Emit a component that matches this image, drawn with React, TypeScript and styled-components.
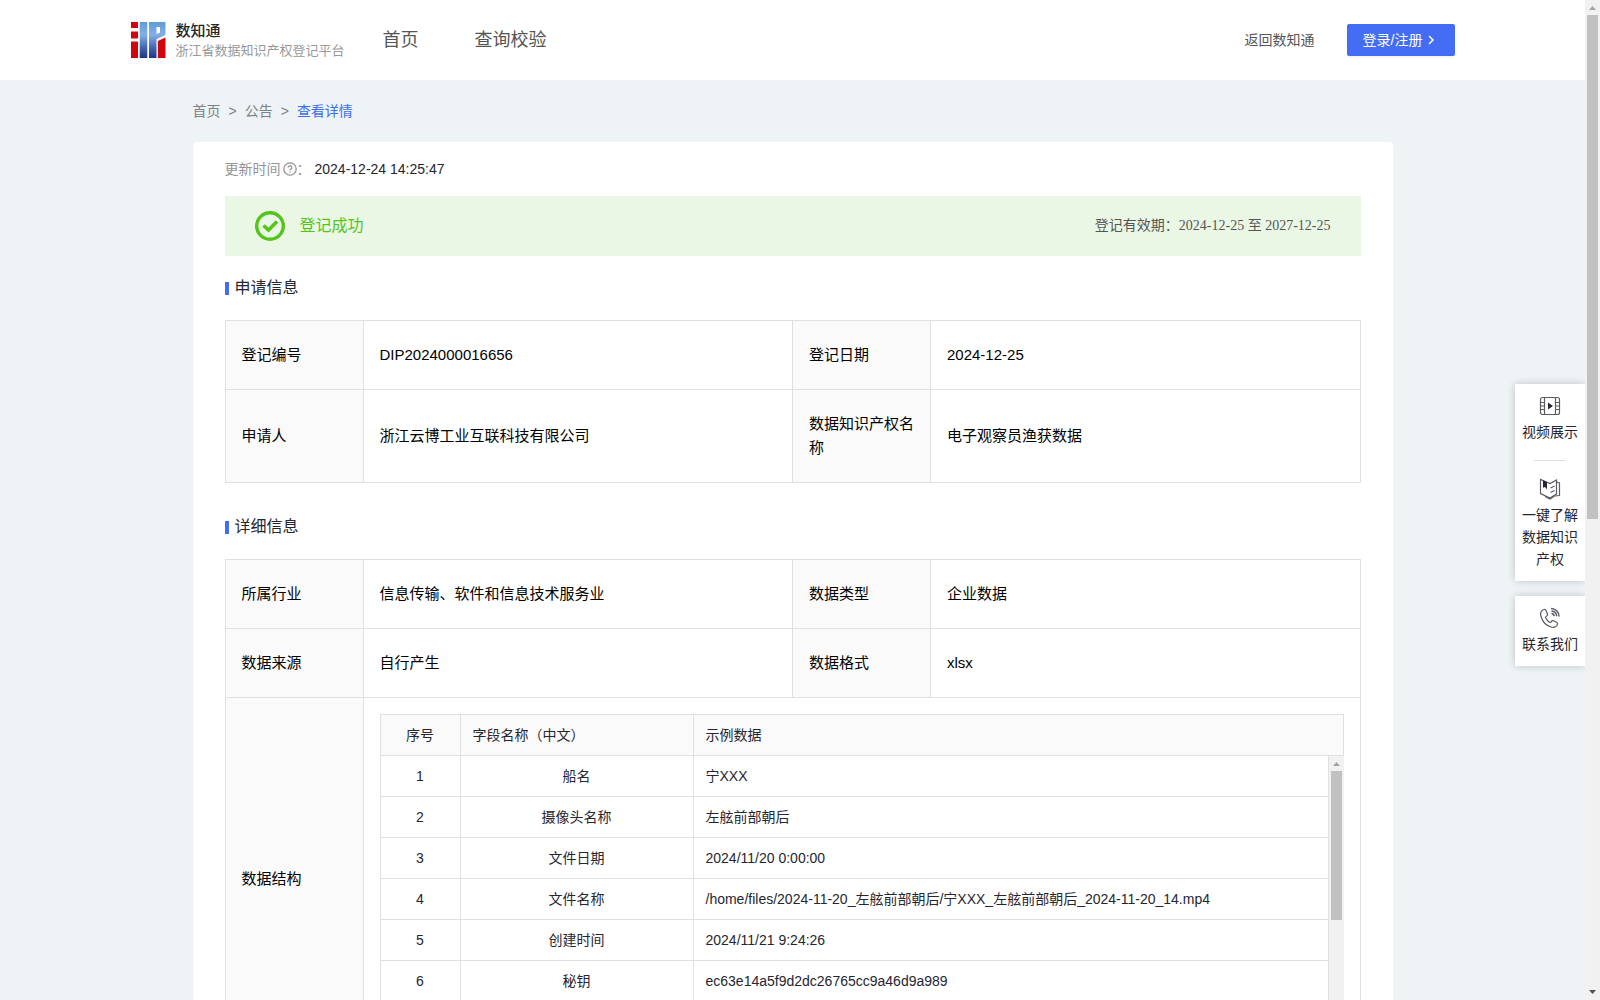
import React from 'react';
import styled, { createGlobalStyle, css } from 'styled-components';

const sans = `"Liberation Sans", "Noto Sans CJK SC", sans-serif`;
const serif = `"Liberation Serif", "Noto Sans CJK SC", serif`;
const line = '#e0e0e0';

const GlobalStyle = createGlobalStyle`
  * { box-sizing: border-box; }
  body {
    margin: 0;
    background: #eef3f6;
    color: #252631;
    font: 14px/22px ${sans};
  }
`;

const Shell = styled.div`
  position: relative;
  display: flex;
  height: 100vh;
  overflow: hidden;
`;

const Viewport = styled.div`
  flex: 1;
  min-width: 0;
  overflow: hidden;
`;

const Track = styled.div`
  display: flex;
  flex: none;
  flex-direction: column;
  width: 15px;
  background: #f1f1f1;
`;

const Arrow = styled.svg`
  flex: none;
  display: block;
`;

const ThumbArea = styled.div`
  flex: 1;
  padding: 0 2px;
`;

const Thumb = styled.div<{ $share: number }>`
  height: ${(p) => p.$share}%;
  background: #c1c1c1;
`;

const Header = styled.header`
  background: #fff;
`;

const HeaderInner = styled.div`
  display: flex;
  align-items: center;
  max-width: 1324px;
  height: 80px;
  margin: 0 auto;
`;

const Brand = styled.a`
  display: flex;
  align-items: center;
  gap: 10px;
  color: #262626;
  text-decoration: none;
`;

const BrandText = styled.span`
  display: flex;
  flex-direction: column;
  font-family: "Noto Sans CJK SC", sans-serif;
  line-height: 20px;
`;

const BrandName = styled.strong`
  font-size: 15px;
  font-weight: 500;
`;

const BrandSub = styled.span`
  color: #999;
  font-size: 13px;
`;

const Nav = styled.nav`
  display: flex;
  flex: 1;
  gap: 56px;
  margin-left: 38px;
`;

const NavLink = styled.a`
  color: #555;
  font-size: 18px;
  text-decoration: none;
`;

const BackLink = styled.a`
  margin-right: 32px;
  color: #555;
  text-decoration: none;
`;

const LoginButton = styled.button`
  display: flex;
  align-items: center;
  gap: 4px;
  width: 108px;
  height: 32px;
  padding: 0 16px;
  border: 0;
  border-radius: 2px;
  background: #446df6;
  box-shadow: 0 2px 0 rgba(0, 0, 0, 0.04);
  color: #fff;
  font: 14px/22px ${sans};
`;

const Page = styled.main`
  max-width: 1200px;
  margin: 0 auto;
`;

const Breadcrumb = styled.nav`
  display: flex;
  gap: 8px;
  padding: 20px 0;
  color: #808185;
`;

const Crumb = styled.a<{ $current?: boolean }>`
  color: ${(p) => (p.$current ? '#3b6cf5' : 'inherit')};
  text-decoration: none;
`;

const Card = styled.section`
  padding: 16px 32px 32px;
  border-radius: 4px;
  background: #fff;
`;

const Updated = styled.div`
  display: flex;
  align-items: center;
  color: #949499;
`;

const UpdatedIcon = styled.svg`
  margin-left: 2px;
`;

const UpdatedTime = styled.time`
  margin-left: 4px;
  color: #252631;
`;

const Banner = styled.div`
  display: flex;
  align-items: center;
  gap: 15px;
  height: 60px;
  margin-top: 16px;
  padding: 0 30px;
  background: #ebf7e5;
`;

const BannerText = styled.span`
  flex: 1;
  color: #52c41a;
  font-size: 16px;
`;

const Validity = styled.span`
  color: #555;
  font-family: ${serif};
`;

const SectionTitle = styled.h2`
  display: flex;
  align-items: center;
  gap: 6px;
  margin: 20px 0;
  color: #252631;
  font-size: 16px;
  font-weight: 400;
  line-height: 24px;

  &::before {
    width: 4px;
    height: 13px;
    background: #446df6;
    content: '';
  }

  table + & {
    margin-top: 32px;
  }
`;

const InfoTable = styled.table`
  width: 100%;
  border-collapse: collapse;
  table-layout: fixed;
  color: #000;
  font-size: 15px;
  line-height: 24px;
`;

const cell = css`
  padding: 22px 16px;
  border: 1px solid ${line};
  font-weight: 400;
  text-align: left;
`;

const LabelCell = styled.th`
  ${cell}
  background: #fafafa;
`;

const ValueCell = styled.td`
  ${cell}
`;

const NestedCell = styled.td`
  padding: 16px;
  border: 1px solid ${line};
`;

const LabelCol = styled.col`
  width: 138px;
`;

const FieldsBody = styled.div`
  display: flex;
  height: 287px;
`;

const FieldsRows = styled.div`
  flex: 1;
  min-width: 0;
`;

const FieldTable = styled.table`
  width: 100%;
  border-collapse: separate;
  border-spacing: 0;
  table-layout: fixed;
  color: #252631;
  font-size: 14px;
  line-height: 22px;
`;

const fieldCell = css<{ $center?: boolean }>`
  height: 41px;
  padding: 0 12px;
  border: solid ${line};
  border-width: 0 1px 1px 0;
  font-weight: 400;
  text-align: ${(p) => (p.$center ? 'center' : 'left')};

  &:first-child {
    border-left-width: 1px;
  }
`;

const FieldHead = styled.th<{ $center?: boolean }>`
  ${fieldCell}
  height: 42px;
  border-top-width: 1px;
  background: #fafafa;
`;

const FieldCell = styled.td<{ $center?: boolean }>`
  ${fieldCell}
`;

const IndexCol = styled.col`
  width: 81px;
`;

const NameCol = styled.col`
  width: 233px;
`;

const Dock = styled.aside`
  position: absolute;
  top: 384px;
  right: 15px;
  display: flex;
  flex-direction: column;
  gap: 15px;
  width: 70px;
`;

const DockCard = styled.div`
  padding: 0 6px;
  background: #fff;
  box-shadow: 0 0 8px rgba(0, 0, 0, 0.2);
  clip-path: inset(-12px 0 -12px -12px);
`;

const DockLink = styled.a`
  display: flex;
  flex-direction: column;
  align-items: center;
  gap: 4px;
  padding: 11px 0;
  color: #252631;
  text-align: center;
  text-decoration: none;

  & + &::before {
    width: 32px;
    height: 1px;
    margin: -5px 0 13px;
    background: ${line};
    content: '';
  }
`;

function Scrollbar({ share, showDown }: { share: number; showDown?: boolean }) {
  return (
    <Track aria-hidden="true">
      <Arrow width="15" height="15" viewBox="0 0 15 15">
        <path d="M4 10L7.500 6L11 10Z" fill="#a3a3a3" />
      </Arrow>
      <ThumbArea>
        <Thumb $share={share} />
      </ThumbArea>
      <Arrow width="15" height="15" viewBox="0 0 15 15">
        {showDown && <path d="M4 5L7.500 9L11 5Z" fill="#505050" />}
      </Arrow>
    </Track>
  );
}

function Logo() {
  return (
    <svg width="35" height="36" viewBox="0 0 35 36" aria-hidden="true">
      <defs>
        <linearGradient id="blue" gradientUnits="userSpaceOnUse" x1="0" y1="0" x2="0" y2="36">
          <stop offset="0" stopColor="#5f9bd8" />
          <stop offset="0.35" stopColor="#85b0e6" />
          <stop offset="0.7" stopColor="#4468b4" />
          <stop offset="1" stopColor="#20367f" />
        </linearGradient>
      </defs>
      <path d="M0 0h7v6H0zM0 9.500h7v7H0zM0 19.500h7V36H0z" fill="#d0060d" />
      <path d="M8.700 0h7.600v36H8.700z" fill="url(#blue)" />
      <path d="M18 0h16.500v13L25.500 17v19H18zM25.500 5v7l3.500-1.500V5z" fill="url(#blue)" fillRule="evenodd" />
      <path d="M26.800 19l7.700-3.500V36h-7.700z" fill="#d0060d" />
    </svg>
  );
}

function VideoIcon() {
  return (
    <svg width="22" height="22" viewBox="0 0 22 22" fill="none" stroke="#5a5b63" strokeWidth="1.200" aria-hidden="true">
      <rect x="1.500" y="2.500" width="19" height="17" rx="2" />
      <path d="M5.500 2.500v17M16.500 2.500v17M1.500 7.500h4M1.500 11h4M1.500 14.500h4M16.500 7.500h4M16.500 11h4M16.500 14.500h4" />
      <path d="M9 7.500l5 3.500-5 3.500z" fill="#252631" stroke="none" />
    </svg>
  );
}

function BookIcon() {
  return (
    <svg width="22" height="22" viewBox="0 0 22 22" fill="none" stroke="#5a5b63" strokeWidth="1.200" aria-hidden="true">
      <path d="M1.500 1.500v14l9.500 4.500 6.500-4V2L11 5.500z" />
      <path d="M17.500 4l3 1v12.500l-5 .5-4.500 3-5-2.500" />
      <path d="M11.500 10l4-2M11.500 14.500l4-2" />
      <path d="M4 2.300l4 2v7L6 9l-2 .8z" fill="#252631" stroke="none" />
    </svg>
  );
}

function PhoneIcon() {
  return (
    <svg width="22" height="22" viewBox="0 0 22 22" fill="none" stroke="#5a5b63" strokeWidth="1.200" aria-hidden="true">
      <path d="M5 2.500C2 3.500 1 6 2 9.500c1.500 5 5 9 10 10.500 3.500 1 6-.5 6.500-3 .2-1-.5-1.500-1.500-2l-2.500-1.300c-1-.5-1.700 0-2.200 1-.5.800-1 1-1.800.5-1.800-1-3-2.500-3.800-4.400-.3-.8 0-1.200.7-1.600 1-.5 1.400-1.200 1-2.200L7.300 4C6.800 2.800 6.200 2.200 5 2.500z" />
      <path d="M12 1.500c4.500 0 8 3.500 8 8M12.500 4c3 .2 5 2.300 5.200 5.200M12.500 6.500c1.500.2 2.500 1.200 2.700 2.700" strokeWidth="1.500" />
    </svg>
  );
}

const fields = [
  ['船名', '宁XXX'],
  ['摄像头名称', '左舷前部朝后'],
  ['文件日期', '2024/11/20 0:00:00'],
  ['文件名称', '/home/files/2024-11-20_左舷前部朝后/宁XXX_左舷前部朝后_2024-11-20_14.mp4'],
  ['创建时间', '2024/11/21 9:24:26'],
  ['秘钥', 'ec63e14a5f9d2dc26765cc9a46d9a989'],
];

function InfoCols() {
  return (
    <colgroup>
      <LabelCol />
      <col />
      <LabelCol />
      <col />
    </colgroup>
  );
}

function FieldCols() {
  return (
    <colgroup>
      <IndexCol />
      <NameCol />
      <col />
    </colgroup>
  );
}

function InfoRow({ items }: { items: [string, string][] }) {
  return (
    <tr>
      {items.map(([label, value]) => (
        <React.Fragment key={label}>
          <LabelCell scope="row">{label}</LabelCell>
          <ValueCell>{value}</ValueCell>
        </React.Fragment>
      ))}
    </tr>
  );
}

export default function App() {
  return (
    <Shell>
      <GlobalStyle />
      <Viewport>
        <Header>
          <HeaderInner>
            <Brand href="#">
              <Logo />
              <BrandText>
                <BrandName>数知通</BrandName>
                <BrandSub>浙江省数据知识产权登记平台</BrandSub>
              </BrandText>
            </Brand>
            <Nav>
              <NavLink href="#">首页</NavLink>
              <NavLink href="#">查询校验</NavLink>
            </Nav>
            <BackLink href="#">返回数知通</BackLink>
            <LoginButton type="button">
              登录/注册
              <svg width="10" height="10" viewBox="0 0 10 10" fill="none" stroke="#fff" strokeWidth="1.500" aria-hidden="true">
                <path d="M3 1l4 4-4 4" />
              </svg>
            </LoginButton>
          </HeaderInner>
        </Header>
        <Page>
          <Breadcrumb>
            <Crumb href="#">首页</Crumb>
            <span>&gt;</span>
            <Crumb href="#">公告</Crumb>
            <span>&gt;</span>
            <Crumb href="#" $current>查看详情</Crumb>
          </Breadcrumb>
          <Card>
            <Updated>
              更新时间
              <UpdatedIcon width="14" height="14" viewBox="0 0 14 14" fill="none" stroke="#949499" strokeWidth="1.300" aria-hidden="true">
                <circle cx="7" cy="7" r="6.200" />
                <path d="M5.200 5.600a1.800 1.800 0 1 1 2.700 1.500c-.6.300-.9.600-.9 1.200M7 9.500v1" />
              </UpdatedIcon>
              ：<UpdatedTime>2024-12-24 14:25:47</UpdatedTime>
            </Updated>
            <Banner>
              <svg width="30" height="30" viewBox="0 0 30 30" fill="none" stroke="#52c41a" aria-hidden="true">
                <circle cx="15" cy="15" r="13.300" strokeWidth="3.400" />
                <path d="M8.500 14.500l5 4.500 8.500-8.500" strokeWidth="3.500" />
              </svg>
              <BannerText>登记成功</BannerText>
              <Validity>登记有效期：2024-12-25 至 2027-12-25</Validity>
            </Banner>

            <SectionTitle>申请信息</SectionTitle>
            <InfoTable>
              <InfoCols />
              <tbody>
                <InfoRow items={[['登记编号', 'DIP2024000016656'], ['登记日期', '2024-12-25']]} />
                <InfoRow items={[['申请人', '浙江云博工业互联科技有限公司'], ['数据知识产权名称', '电子观察员渔获数据']]} />
              </tbody>
            </InfoTable>

            <SectionTitle>详细信息</SectionTitle>
            <InfoTable>
              <InfoCols />
              <tbody>
                <InfoRow items={[['所属行业', '信息传输、软件和信息技术服务业'], ['数据类型', '企业数据']]} />
                <InfoRow items={[['数据来源', '自行产生'], ['数据格式', 'xlsx']]} />
                <tr>
                  <LabelCell scope="row">数据结构</LabelCell>
                  <NestedCell colSpan={3}>
                    <FieldTable>
                      <FieldCols />
                      <thead>
                        <tr>
                          <FieldHead scope="col" $center>序号</FieldHead>
                          <FieldHead scope="col">字段名称（中文）</FieldHead>
                          <FieldHead scope="col">示例数据</FieldHead>
                        </tr>
                      </thead>
                    </FieldTable>
                    <FieldsBody>
                      <FieldsRows>
                        <FieldTable>
                          <FieldCols />
                          <tbody>
                            {fields.map(([name, sample], i) => (
                              <tr key={name}>
                                <FieldCell $center>{i + 1}</FieldCell>
                                <FieldCell $center>{name}</FieldCell>
                                <FieldCell>{sample}</FieldCell>
                              </tr>
                            ))}
                          </tbody>
                        </FieldTable>
                      </FieldsRows>
                      <Scrollbar share={58} />
                    </FieldsBody>
                  </NestedCell>
                </tr>
              </tbody>
            </InfoTable>
          </Card>
        </Page>
      </Viewport>
      <Scrollbar share={52} showDown />
      <Dock>
        <DockCard>
          <DockLink href="#"><VideoIcon />视频展示</DockLink>
          <DockLink href="#"><BookIcon />一键了解数据知识产权</DockLink>
        </DockCard>
        <DockCard>
          <DockLink href="#"><PhoneIcon />联系我们</DockLink>
        </DockCard>
      </Dock>
    </Shell>
  );
}
